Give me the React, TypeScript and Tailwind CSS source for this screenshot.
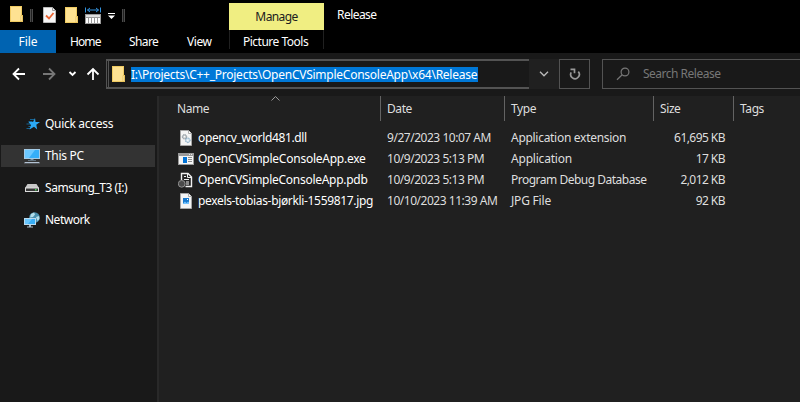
import React from "react";

const FONT = "font-['Noto_Sans','Open_Sans',sans-serif]";

function Folder() {
  return (
    <svg width="14" height="16" viewBox="0 0 14 16" className="block shrink-0">
      <path d="M0 0h12v9h1v7H0z" fill="#f0cb62" />
      <path d="M1 1h10v8l1 1v5H1z" fill="#fee292" />
      <path d="M11 9.500h1.500v6H11z" fill="#ffefb9" stroke="#e3b748" strokeWidth=".7" />
    </svg>
  );
}

function Divider() {
  return <div className="h-[13px] w-[3px] border-x border-[#4a4a4a] bg-[#202020]" />;
}

function Page({ children }: { children?: React.ReactNode }) {
  return (
    <svg width="16" height="16" viewBox="0 0 16 16" className="block">
      <path d="M2.500.5h8l3 3v12h-11z" fill="#f4f4f4" stroke="#a6a6a6" />
      <path d="M10.500.5v3h3" fill="#fff" stroke="#999" strokeWidth=".8" />
      {children}
    </svg>
  );
}

const icons: Record<string, React.ReactNode> = {
  dll: (
    <Page>
      <circle cx="6.500" cy="6.800" r="2.200" fill="#c4c9cd" stroke="#7e888f" strokeDasharray="1 .6" />
      <circle cx="9.800" cy="10.300" r="2.300" fill="#cfdfea" stroke="#739dbb" strokeDasharray="1 .6" />
      <circle cx="6.500" cy="6.800" r=".8" fill="#fff" />
      <circle cx="9.800" cy="10.300" r=".8" fill="#fff" />
    </Page>
  ),
  exe: (
    <svg width="16" height="16" viewBox="0 0 16 16" className="block">
      <path d="M0 2h16v12H0z" fill="#9a9a9a" />
      <path d="M1 5h14v8H1z" fill="#f5f5f5" />
      <path d="M5 6h4v6H5z" fill="#0072d6" />
      <path d="M10 6.500h4M10 8.500h4M10 10.500h4" stroke="#8d8d8d" />
      <path d="M11 3.500h1M13 3.500h1" stroke="#e7e7e7" />
    </svg>
  ),
  pdb: (
    <svg width="16" height="16" viewBox="0 0 16 16" className="block">
      <path d="M3.500 8V1.500h6.500l3.500 3.500v9.500h-6" fill="#252525" stroke="#f0f0f0" strokeWidth="1.400" />
      <path d="M9.500 1.500v4h4M6 4.500h2M6 7.500h5M8 10h3M8 12h3" fill="none" stroke="#f0f0f0" />
      <circle cx="3.700" cy="11.800" r="3.400" fill="#4a4a4a" stroke="#a5a5a5" strokeWidth=".8" />
    </svg>
  ),
  jpg: (
    <Page>
      <path d="M5 5h6v6H5z" fill="#1879ce" />
      <path d="M5 10.500l2-2 1.500 1.500L10 8.500l1 1V11H5z" fill="#74c4ff" />
      <path d="M9 6h1v1H9z" fill="#fff" />
    </Page>
  ),
};

const files: { kind: string; name: string; nameCls: string; date: string; type: string; typeCls: string; size: string }[] = [
  { kind: "dll", name: "opencv_world481.dll", nameCls: "tracking-[-0.35px]", date: "9/27/2023 10:07 AM", type: "Application extension", typeCls: "tracking-[-0.29px]", size: "61,695 KB" },
  { kind: "exe", name: "OpenCVSimpleConsoleApp.exe", nameCls: "tracking-[-0.25px]", date: "10/9/2023 5:13 PM", type: "Application", typeCls: "tracking-[-0.2px]", size: "17 KB" },
  { kind: "pdb", name: "OpenCVSimpleConsoleApp.pdb", nameCls: "tracking-[-0.28px]", date: "10/9/2023 5:13 PM", type: "Program Debug Database", typeCls: "tracking-[-0.5px]", size: "2,012 KB" },
  { kind: "jpg", name: "pexels-tobias-bjørkli-1559817.jpg", nameCls: "tracking-[-0.34px]", date: "10/10/2023 11:39 AM", type: "JPG File", typeCls: "tracking-[-0.2px]", size: "92 KB" },
];

const places: { label: string; cls: string; icon: React.ReactNode }[] = [
  {
    label: "Quick access",
    cls: "tracking-[-0.3px]",
    icon: (
      <svg width="16" height="16" viewBox="0 0 16 16" className="block">
        <path d="M4.500 5.500h4M6 3.500h4M2.500 8h5M4.500 10.500h4M2.500 12.500h4" stroke="#176b9e" strokeWidth=".9" />
        <path d="M11 2l.5 4H16l-3.700 2.700.9 4.800-3.200-2.700-4.500 2.700 1.500-4.500L4.500 6H9z" fill="#2ba9f5" />
      </svg>
    ),
  },
  {
    label: "This PC",
    cls: "tracking-[-0.3px]",
    icon: (
      <svg width="16" height="16" viewBox="0 0 16 16" className="block">
        <path d="M0 1h16v10H0z" fill="#a4cbe6" />
        <path d="M1 2h14v8H1z" fill="#35aef8" />
        <path d="M1 2h10L5 10H1z" fill="#6cc8ff" />
        <path d="M6.500 11h3v1h-3z" fill="#7d98aa" />
        <path d="M4 12h8v.8H4z" fill="#6e8392" />
        <path d="M1 14h14l1 1.200H0z" fill="#b3c2d3" />
      </svg>
    ),
  },
  {
    label: "Samsung_T3 (I:)",
    cls: "tracking-[-0.45px]",
    icon: (
      <svg width="16" height="16" viewBox="0 0 16 16" className="block">
        <path d="M3.500 4h9l2.500 4H1z" fill="#c8c8c8" />
        <path d="M1 7.500h14V12H1z" fill="#dcdcdc" />
        <path d="M2 8.500h12V11H2z" fill="#373737" />
        <path d="M11 9h1.500v1.500H11z" fill="#45dd55" />
      </svg>
    ),
  },
  {
    label: "Network",
    cls: "tracking-[-0.5px]",
    icon: (
      <svg width="16" height="16" viewBox="0 0 16 16" className="block">
        <circle cx="10.500" cy="5.500" r="5.300" fill="#4a90ad" />
        <path d="M7 2l3-1.500 1 2-2 2.500-3 .5zM12 5l3-1 .5 3-2 2z" fill="#b5dfea" />
        <path d="M0 6h12v7H0z" fill="#b9daef" />
        <path d="M1 7h10v5H1z" fill="#37adf4" />
        <path d="M1 7h7l-4 5H1z" fill="#68c5fc" />
        <path d="M5 13h2v1.500h2v1H3v-1h2z" fill="#a7b8c4" />
      </svg>
    ),
  },
];

export default function App() {
  return (
    <div className={`flex h-[402px] w-[800px] flex-col overflow-hidden bg-[#191919] text-[12px] leading-4 tracking-[-0.4px] whitespace-nowrap text-white ${FONT}`}>
      <header className="flex h-[53px] shrink-0 bg-black">
        <div className="flex w-[229px] flex-col">
          <div className="flex h-[30px] items-center pl-[10px]">
            <div className="mt-[-2px]"><Folder /></div>
            <div className="ml-[6px]"><Divider /></div>
            <svg width="13" height="16" viewBox="0 0 13 16" className="ml-[10px] block">
              <path d="M.5.5h9l3 3v12H.5z" fill="#f6f6f6" stroke="#bababa" />
              <path d="M9.500.5v3h3" fill="none" stroke="#999" />
              <path d="M3 8.500l3 3L10.500 6" fill="none" stroke="#e96332" strokeWidth="1.800" />
            </svg>
            <div className="ml-[9px]"><Folder /></div>
            <svg width="16" height="17" viewBox="0 0 16 17" className="ml-[6px] block">
              <path d="M.5.5v5M15.500.5v5M2.500 3h11M5 1L2.500 3 5 5M11 1l2.500 2L11 5" fill="none" stroke="#3594df" />
              <path d="M0 7h16v10H0z" fill="#9b9b9b" />
              <path d="M1 8h14v2H1z" fill="#dedede" />
              <path d="M1 11h2v5H1zM4 11h2v5H4zM7 11h2v5H7zM10 11h2v5h-2zM13 11h2v5h-2z" fill="#fff" />
            </svg>
            <svg width="7" height="6" viewBox="0 0 7 6" className="mt-[2px] ml-[7px] block">
              <path d="M0 0h7v1H0zM0 2.500h7L3.500 6z" fill="#fff" />
            </svg>
            <div className="ml-[7px]"><Divider /></div>
          </div>
          <nav className="flex h-[23px] items-center">
            <div className="flex h-full w-14 items-center justify-center bg-[#0063b1] tracking-[-0.1px]">File</div>
            <span className="w-[59px] pl-[14px] tracking-[-0.9px]">Home</span>
            <span className="w-[60px] pl-[14px] tracking-[-0.6px]">Share</span>
            <span className="pl-[12px]">View</span>
          </nav>
        </div>
        <div className="w-[95px] pt-[3px] text-center tracking-[-0.6px]">
          <div className="flex h-[27px] items-center justify-center bg-[#f0ee82] text-[#202020]">Manage</div>
          <div className="flex h-[19px] items-center border-x border-[#202020] pt-[4px] pl-[13px] tracking-[-0.5px]">Picture Tools</div>
        </div>
        <span className="pt-[7px] pl-[13px] tracking-[-0.55px]">Release</span>
      </header>

      <div className="flex h-[43px] shrink-0 pt-[6px]">
        <svg width="106" height="30" viewBox="0 0 106 30" className="block shrink-0" fill="none" stroke="#fff" strokeWidth="1.800">
          <path d="M25 15H14M19 9.500L13.500 15l5.500 5.500" />
          <path d="M43 15h11M49 9.500l5.500 5.500-5.500 5.500" stroke="#777" />
          <path d="M69.500 13l3 3 3-3" />
          <path d="M93 21V10M87.500 15.500L93 10l5.500 5.500" />
        </svg>
        <div className="flex h-[30px] w-[423px] shrink-0 border-y-2 border-l border-[#535353] pl-px">
          <div className="flex flex-1 items-center border-l border-[#535353] pl-[3px]">
            <Folder />
            <span className="ml-[5px] h-[15px] w-[347px] bg-[#0078d7] leading-[15px] tracking-[-0.25px]">I:\Projects\C++_Projects\OpenCVSimpleConsoleApp\x64\Release</span>
          </div>
        </div>
        <div className="flex h-[30px] w-[30px] shrink-0 items-center justify-center bg-[#202020]">
          <svg width="10" height="6" viewBox="0 0 10 6"><path d="M1 .8l4 4 4-4" fill="none" stroke="#bbb" strokeWidth="1.300" /></svg>
        </div>
        <div className="flex h-[30px] w-[31px] shrink-0 items-center justify-center border border-[#535353]">
          <svg width="12" height="12" viewBox="0 0 12 12" fill="none" stroke="#999" strokeWidth="1.700"><path d="M2.200 4.300A4.300 4.300 0 1 0 9.300 3.600M1.500 1.300h4v4" /></svg>
        </div>
        <div className="ml-[12px] flex h-[30px] w-[198px] shrink-0 items-center border border-r-0 border-[#535353] pl-[13px] text-[#777]">
          <svg width="14" height="14" viewBox="0 0 14 14" fill="none" stroke="#777" strokeWidth="1.200"><circle cx="9" cy="5" r="3.900" /><path d="M6.200 7.700L1 12.700" /></svg>
          <span className="ml-[13px] tracking-[-0.5px]">Search Release</span>
        </div>
      </div>

      <main className="flex min-h-0 flex-1">
        <aside className="flex w-[157px] shrink-0 flex-col pt-[12px]">
          {places.map(({ label, cls, icon }) => (
            <div key={label} className="flex h-8 w-[155px] items-center pl-px">
              <div className={`flex w-full items-center gap-[5px] pl-[23px] ${label === "This PC" ? "h-[22px] bg-[#333]" : ""}`}>
                {icon}<span className={cls}>{label}</span>
              </div>
            </div>
          ))}
        </aside>
        <section className="flex-1 border-l-2 border-[#292929] bg-[#202020]">
          <div className="flex h-[25px] text-[#dedede]">
            <div className="relative w-[222px] border-r border-[#636363] pt-[5px] pl-[18px]">
              Name
              <svg width="9" height="5" viewBox="0 0 9 5" className="absolute top-0 left-[112px]"><path d="M.5 4.500l4-4 4 4" fill="none" stroke="#999" /></svg>
            </div>
            <div className="w-[124px] border-r border-[#636363] pt-[5px] pl-[6px]">Date</div>
            <div className="w-[149px] border-r border-[#636363] pt-[5px] pl-[6px]">Type</div>
            <div className="w-[80px] border-r border-[#636363] pt-[5px] pl-[6px]">Size</div>
            <div className="pt-[5px] pl-[6px]">Tags</div>
          </div>
          <div className="pt-[6px]">
            {files.map((f) => (
              <div key={f.name} className="flex h-[21px] items-center text-[#dedede]">
                <div className="ml-[19px] w-4">{icons[f.kind]}</div>
                <span className={`w-[188px] pl-[4px] text-white ${f.nameCls}`}>{f.name}</span>
                <span className="w-[125px] pl-[5px] tracking-[-0.47px]">{f.date}</span>
                <span className={`w-[149px] pl-[4px] ${f.typeCls}`}>{f.type}</span>
                <span className="w-[69px] text-right tracking-[-0.55px]">{f.size}</span>
              </div>
            ))}
          </div>
        </section>
      </main>
    </div>
  );
}
